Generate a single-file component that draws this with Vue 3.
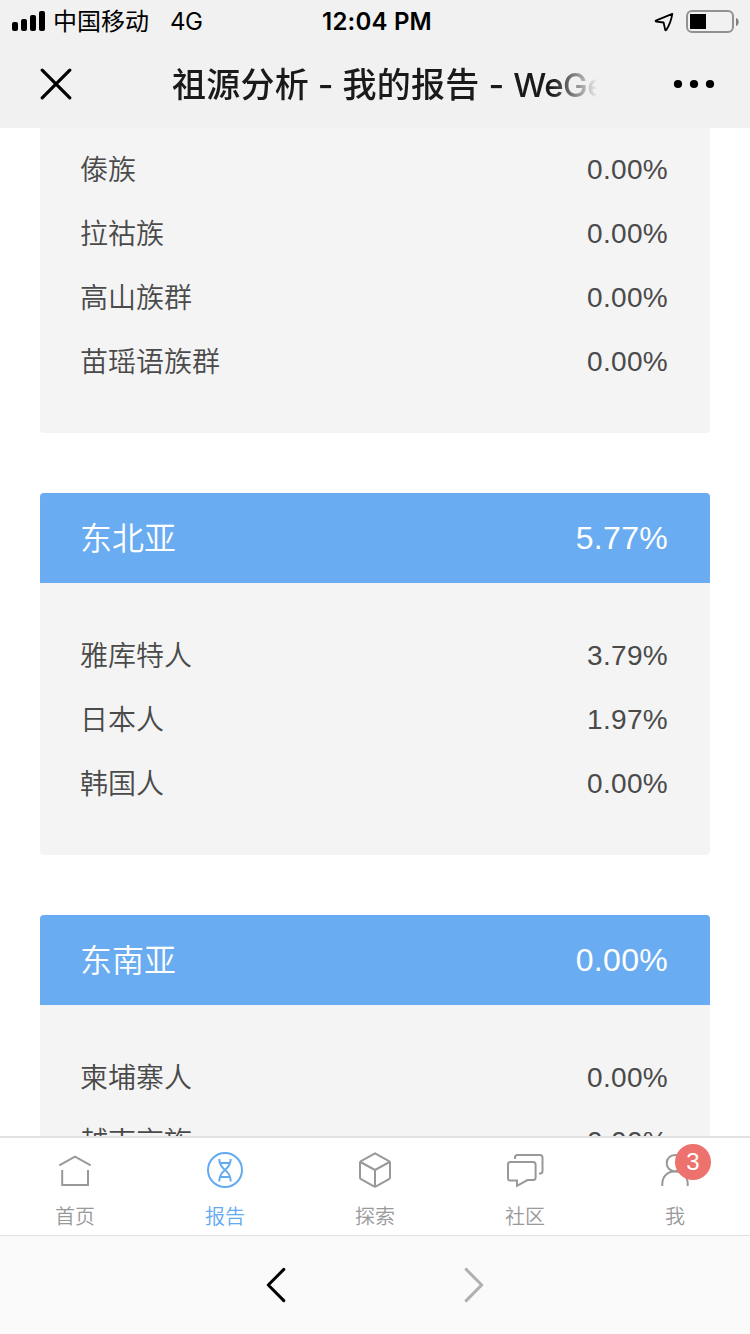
<template>
  <div class="page">
    <header class="top">
      <div class="status">
        <div class="carrier">
          <svg class="signal" width="34" height="20" viewBox="0 0 34 20">
            <rect x="0" y="11" width="6" height="9" rx="2" />
            <rect x="9" y="8" width="6" height="12" rx="2" />
            <rect x="18" y="4" width="6" height="16" rx="2" />
            <rect x="27" y="0" width="6" height="20" rx="2" />
          </svg>
          <span class="operator">中国移动</span>
          <span class="network">4G</span>
        </div>
        <div class="time">12:04 PM</div>
        <div class="indicators">
          <svg width="20" height="20" viewBox="0 0 20 20">
            <path
              d="M18.3 1.8 L1.8 8.6 Q1.3 9.4 2.4 9.6 L9.6 10.5 L11.2 17.8 Q11.6 18.8 12.3 17.9 Q17 10.5 18.3 1.8 Z"
              fill="none"
              stroke="#000"
              stroke-width="1.8"
              stroke-linejoin="round"
            />
          </svg>
          <svg class="battery" width="54" height="24" viewBox="0 0 54 24">
            <rect
              x="1"
              y="1"
              width="46"
              height="21"
              rx="5"
              fill="none"
              stroke="#929292"
              stroke-width="2"
            />
            <rect x="4" y="4" width="16" height="15" />
            <path d="M50 8 C53.6 9 53.6 15 50 16 Z" fill="#808080" />
          </svg>
        </div>
      </div>
      <div class="nav">
        <svg class="close" width="32" height="32" viewBox="0 0 32 32">
          <path
            d="M2.2 2.2 L29.8 29.8 M29.8 2.2 L2.2 29.8"
            stroke="#000"
            stroke-width="3.2"
            stroke-linecap="round"
          />
        </svg>
        <div class="title">祖源分析 - 我的报告 - <span class="brand">WeGene</span></div>
        <svg class="more" width="42" height="10" viewBox="0 0 42 10">
          <circle cx="5" cy="5" r="4.1" />
          <circle cx="21" cy="5" r="4.1" />
          <circle cx="37" cy="5" r="4.1" />
        </svg>
      </div>
    </header>

    <main class="content">
      <section
        v-for="(group, index) in groups"
        :key="index"
        class="card"
        :class="{ continued: !group.name }"
      >
        <div v-if="group.name" class="card-head">
          <span>{{ group.name }}</span>
          <span class="percent">{{ group.value }}</span>
        </div>
        <ul class="card-body">
          <li v-for="item in group.items" :key="item.name">
            <span>{{ item.name }}</span>
            <span class="percent">{{ item.value }}</span>
          </li>
        </ul>
      </section>
    </main>

    <nav class="tabs">
      <div
        v-for="tab in tabs"
        :key="tab.icon"
        class="tab"
        :class="{ active: tab.icon === activeTab }"
      >
        <div class="tab-icon">
          <svg width="40" height="40" viewBox="0 0 40 40">
            <g v-if="tab.icon === 'home'">
              <path d="M4.3 15.3 L20 6.6 L35.7 15.3" />
              <path d="M7.2 20 V35 H33 V20" />
            </g>
            <g v-else-if="tab.icon === 'report'">
              <circle cx="20" cy="20" r="17" />
              <path
                d="M14.3 9 C14.3 15 17 17.5 20 20 C23 22.5 25.7 25 25.7 31.5 M25.7 9 C25.7 15 23 17.5 20 20 C17 22.5 14.3 25 14.3 31.5 M15 13 H25 M15 27 H25"
              />
            </g>
            <g v-else-if="tab.icon === 'explore'">
              <path
                d="M20 3.4 L34 11 Q35 11.6 35 12.6 V27.4 Q35 28.5 34 29.2 L21 36.4 Q20 36.9 19 36.4 L6 29.2 Q5 28.5 5 27.4 V12.6 Q5 11.6 6 11 Z"
              />
              <path d="M5.5 12 L20 20 L34.5 12 M20 20 V36.5" />
            </g>
            <g v-else-if="tab.icon === 'community'">
              <path
                d="M5 12 H28 Q30.6 12 30.6 14.6 V27.5 Q30.6 30 28 30 H22.5 L12 35.8 V30.5 H5 Q3 30.5 3 28 V14.5 Q3 12 5 12 Z"
              />
              <path d="M10 9 V7.5 Q10 5 12.5 5 H35 Q37.5 5 37.5 7.5 V21 Q37.5 23.5 35 23.5 H34" />
            </g>
            <g v-else>
              <circle cx="20" cy="13.2" r="8.3" />
              <path d="M7.3 36 V33.5 C8 17 32 17 32.7 33.5 V36" />
            </g>
          </svg>
          <span v-if="tab.badge" class="badge">{{ tab.badge }}</span>
        </div>
        <div class="tab-label">{{ tab.label }}</div>
      </div>
    </nav>

    <footer class="browser-bar">
      <svg width="20" height="36" viewBox="0 0 20 36">
        <path d="M17.8 2.4 L2.3 18 L17.8 33.6" stroke="#000" />
      </svg>
      <svg width="20" height="36" viewBox="0 0 20 36">
        <path d="M2.2 2.4 L17.7 18 L2.2 33.6" stroke="#b0b0b0" />
      </svg>
    </footer>
  </div>
</template>

<script setup>
import { ref } from "vue";

const activeTab = ref("report");

const groups = ref([
  {
    items: [
      { name: "傣族", value: "0.00%" },
      { name: "拉祜族", value: "0.00%" },
      { name: "高山族群", value: "0.00%" },
      { name: "苗瑶语族群", value: "0.00%" },
    ],
  },
  {
    name: "东北亚",
    value: "5.77%",
    items: [
      { name: "雅库特人", value: "3.79%" },
      { name: "日本人", value: "1.97%" },
      { name: "韩国人", value: "0.00%" },
    ],
  },
  {
    name: "东南亚",
    value: "0.00%",
    items: [
      { name: "柬埔寨人", value: "0.00%" },
      { name: "越南京族", value: "0.00%" },
    ],
  },
]);

const tabs = [
  { icon: "home", label: "首页" },
  { icon: "report", label: "报告" },
  { icon: "explore", label: "探索" },
  { icon: "community", label: "社区" },
  { icon: "me", label: "我", badge: 3 },
];
</script>

<style>
body {
  margin: 0;
  background: #fff;
}
</style>

<style scoped>
.page {
  display: flex;
  flex-direction: column;
  width: 750px;
  height: 1334px;
  overflow: hidden;
  background: #fff;
  font-family: "Liberation Sans", "Noto Sans CJK SC", sans-serif;
}

.top {
  flex: none;
  height: 128px;
  background: #f1f1f1;
  font-family: Inter, "Noto Sans CJK SC", sans-serif;
  color: #000;
}

.status {
  display: grid;
  grid-template-columns: 1fr auto 1fr;
  align-items: center;
  height: 40px;
  padding: 0 10px 0 12px;
}

.carrier {
  display: flex;
  align-items: center;
  font-size: 24px;
  line-height: 40px;
}

.operator {
  margin-left: 7px;
  padding-top: 2px;
}

.network {
  margin-left: 21px;
  padding-top: 2px;
  letter-spacing: -0.6px;
}

.time {
  margin-left: 2px;
  padding-top: 2px;
  font-size: 24px;
  font-weight: 600;
  line-height: 40px;
  letter-spacing: 0.2px;
}

.indicators {
  display: flex;
  align-items: center;
  justify-content: flex-end;
  gap: 12px;
  padding-top: 1px;
}

.nav {
  display: flex;
  align-items: center;
  height: 88px;
  padding: 0 35px 0 40px;
}

.title {
  width: 424px;
  margin-left: 100px;
  margin-right: 77px;
  padding-top: 2px;
  overflow: hidden;
  white-space: nowrap;
  font-size: 34px;
  font-weight: 500;
  line-height: 88px;
  letter-spacing: 0.25px;
  word-spacing: -0.5px;
  color: #1a1a1a;
  mask-image: linear-gradient(to right, #000 380px, transparent 426px);
}

.brand {
  font-size: 33px;
  letter-spacing: -0.5px;
}

.close,
.more,
.signal,
.battery {
  flex: none;
}

.content {
  flex: 1;
  min-height: 0;
  overflow: hidden;
  padding: 0 40px;
}

.card {
  margin-bottom: 60px;
  border-radius: 4px;
  overflow: hidden;
  background: #f4f4f4;
}

.card-head {
  display: flex;
  justify-content: space-between;
  height: 90px;
  padding: 0 42px 0 40px;
  background: #69acf1;
  color: #fff;
  font-size: 32px;
  font-weight: 350;
  line-height: 92px;
}

.card-head .percent {
  line-height: 91px;
}

.card-body {
  margin: 0;
  padding: 40px 42px 40px 40px;
  list-style: none;
  color: #4a4a4a;
  font-size: 28px;
  font-weight: 350;
}

.card-body li {
  display: flex;
  justify-content: space-between;
  height: 64px;
  line-height: 67px;
}

.card-body .percent {
  line-height: 66px;
}

.continued {
  border-radius: 0 0 4px 4px;
}

.continued .card-body {
  padding-top: 9px;
}

.percent {
  letter-spacing: 0.3px;
}

.tabs {
  display: flex;
  flex: none;
  box-sizing: border-box;
  height: 99px;
  border-top: 2px solid #e2e2e2;
  background: #fff;
}

.tab {
  flex: 1;
  display: flex;
  flex-direction: column;
  align-items: center;
  padding-top: 12px;
  color: #999;
}

.tab.active {
  color: #62aaf2;
}

.tab-icon {
  position: relative;
  width: 40px;
  height: 40px;
}

.tab-icon svg {
  display: block;
  fill: none;
  stroke: currentColor;
  stroke-width: 2;
}

.badge {
  position: absolute;
  top: -6px;
  left: 20px;
  width: 36px;
  height: 36px;
  border-radius: 50%;
  background: #ed716d;
  color: #fff;
  font-size: 24px;
  line-height: 36px;
  text-align: center;
}

.tab-label {
  margin-top: 13px;
  font-size: 20px;
  font-weight: 350;
  line-height: 28px;
}

.browser-bar {
  display: flex;
  flex: none;
  justify-content: center;
  align-items: center;
  gap: 178px;
  box-sizing: border-box;
  height: 99px;
  border-top: 1px solid #e0e0e0;
  background: #fafafa;
}

.browser-bar path {
  fill: none;
  stroke-width: 3;
  stroke-linecap: round;
  stroke-linejoin: round;
}
</style>
